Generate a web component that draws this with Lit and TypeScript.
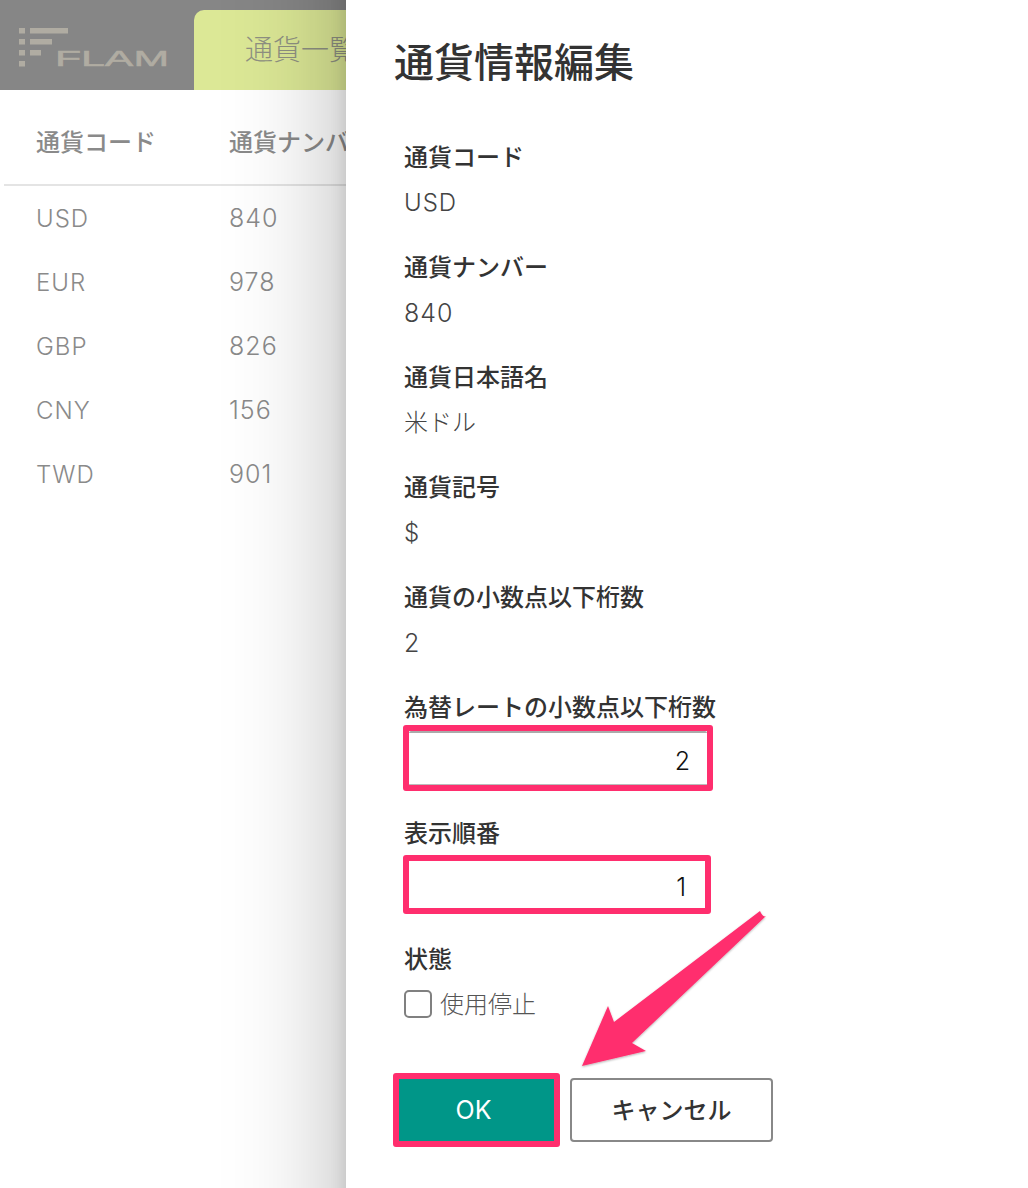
import { LitElement, html, css, svg } from "lit";
import { customElement } from "lit/decorators.js";

const ROWS = [
  ["USD", "840"],
  ["EUR", "978"],
  ["GBP", "826"],
  ["CNY", "156"],
  ["TWD", "901"],
];

const FIELDS = [
  ["通貨コード", "USD"],
  ["通貨ナンバー", "840"],
  ["通貨日本語名", "米ドル"],
  ["通貨記号", "$"],
  ["通貨の小数点以下桁数", "2"],
];

const isNum = (v: string) => /^[0-9]+$/.test(v);
const isLatin = (v: string) => /^[\x20-\x7e]+$/.test(v);

@customElement("app-root")
export class AppRoot extends LitElement {
  static styles = css`
    :host {
      display: block;
      position: relative;
      width: 1028px;
      height: 1188px;
      overflow: hidden;
      background: #fff;
      font-family: Inter, "Noto Sans CJK JP", sans-serif;
      font-size: 24px;
      color: #333;
    }
    .header {
      display: flex;
      align-items: flex-end;
      height: 90px;
      background: #868686;
    }
    .logo {
      display: block;
      width: 194px;
      height: 90px;
      flex: none;
    }
    .logo-text {
      font-family: "Liberation Sans", sans-serif;
      font-size: 22px;
      font-weight: 400;
      fill: #b0aca2;
      stroke: #b0aca2;
      stroke-width: 0.5px;
    }
    .tab {
      flex: none;
      width: 240px;
      height: 80px;
      box-sizing: border-box;
      padding: 0 0 0 51px;
      border-radius: 10px 0 0 0;
      background: #dce896;
      color: #8f9183;
      font-size: 28px;
      font-weight: 300;
      line-height: 80px;
      white-space: nowrap;
    }
    .table {
      margin-left: 4px;
      width: 500px;
      color: #8a8a8a;
    }
    .thead {
      display: flex;
      height: 95px;
      box-sizing: border-box;
      padding-top: 6px;
      align-items: center;
      border-bottom: 2px solid #e4e4e4;
      font-weight: 500;
      margin-top: 1px;
    }
    .tr {
      display: flex;
      height: 64px;
      align-items: center;
      font-weight: 300;
      letter-spacing: 1px;
    }
    .cell1 {
      width: 193px;
      padding-left: 32px;
      flex: none;
    }
    .digits {
      font-size: 25px;
    }
    .panel {
      position: absolute;
      z-index: 1;
      top: 0;
      right: 0;
      bottom: 0;
      width: 682px;
      box-sizing: border-box;
      padding: 35px 0 0 58px;
      background: #fff;
    }
    .panel::before {
      content: "";
      position: absolute;
      z-index: -1;
      left: 0;
      right: 0;
      top: -300px;
      bottom: -300px;
      box-shadow: 0 0 110px rgba(0, 0, 0, 0.3), 0 0 16px rgba(0, 0, 0, 0.12);
    }
    h1 {
      margin: 0 0 50px -10px;
      font-size: 40px;
      font-weight: 500;
      line-height: 56px;
      color: #333;
    }
    .label {
      font-weight: 500;
      line-height: 34px;
      color: #333;
    }
    .value {
      margin: 11px 0 31px;
      font-weight: 300;
      line-height: 34px;
      color: #444;
    }
    .latin {
      letter-spacing: 1px;
    }
    .box {
      box-sizing: border-box;
      border: 6px solid #ff2e6e;
      border-radius: 3px;
      margin-left: -1px;
    }
    .box input {
      display: block;
      box-sizing: border-box;
      width: 100%;
      height: 100%;
      margin: 0;
      background: #fff;
      font: 300 25px Inter, sans-serif;
      color: #111;
      text-align: right;
      outline: none;
    }
    .box-a {
      width: 310px;
      height: 66px;
      margin-top: 0;
      margin-bottom: 26px;
    }
    .box-a input {
      border: 0;
      border-top: 2px solid #aaa;
      border-bottom: 1px solid #bbb;
      border-radius: 2px 2px 0 0;
      padding: 4px 17px 0 0;
    }
    .box-b {
      width: 308px;
      height: 59px;
      margin-top: 4px;
      margin-bottom: 29px;
    }
    .box-b input {
      border: 0;
      padding: 4px 19px 0 0;
    }
    .check-row {
      display: flex;
      align-items: center;
      gap: 8px;
      height: 28px;
      margin-top: 13px;
      font-weight: 300;
      line-height: 24px;
      color: #555;
    }
    .check {
      flex: none;
      box-sizing: border-box;
      width: 28px;
      height: 28px;
      border: 2px solid #808080;
      border-radius: 5px;
      background: #fff;
    }
    .check-text {
      margin-top: 1px;
    }
    .actions {
      display: flex;
      align-items: center;
      gap: 10px;
      margin: 55px 0 0 -11px;
    }
    .btn {
      box-sizing: border-box;
      font-family: inherit;
      font-size: 24px;
      font-weight: 500;
      padding: 0;
      cursor: pointer;
    }
    .ok {
      width: 167px;
      height: 74px;
      border: 6px solid #ff2e6e;
      border-radius: 3px;
      background: #009688;
      color: #fff;
      font-size: 25px;
      font-weight: 400;
      padding-right: 6px;
    }
    .cancel {
      width: 203px;
      height: 64px;
      border: 2px solid #888;
      border-radius: 4px;
      background: #fff;
      color: #333;
      padding-bottom: 4px;
    }
    .arrow {
      position: absolute;
      z-index: 2;
      left: 0;
      top: 0;
      width: 1028px;
      height: 1188px;
      pointer-events: none;
    }
  `;

  render() {
    return html`
      <div class="header">
        <svg class="logo" viewBox="0 0 194 90">
          ${[28, 39, 50, 61].map((y) => svg`<rect x="19" y=${y} width="6" height="5.5" fill="#b0aca2"></rect>`)}
          <rect x="30" y="28" width="38" height="5.5" fill="#b0aca2"></rect>
          <rect x="30" y="39" width="22" height="5.5" fill="#b0aca2"></rect>
          <rect x="30" y="50" width="11" height="5.5" fill="#b0aca2"></rect>
          <text class="logo-text" x="55" y="66" textLength="114" lengthAdjust="spacingAndGlyphs">FLAM</text>
        </svg>
        <div class="tab">通貨一覧</div>
      </div>
      <div class="table">
        <div class="thead">
          <div class="cell1">通貨コード</div>
          <div>通貨ナンバー</div>
        </div>
        <div>
          ${ROWS.map(
            ([code, num]) =>
              html`<div class="tr"><div class="cell1">${code}</div><div class="digits">${num}</div></div>`
          )}
        </div>
      </div>
      <div class="panel">
        <h1>通貨情報編集</h1>
        ${FIELDS.map(
          ([label, value]) =>
            html`<div class="label">${label}</div>
              <div class="value ${isLatin(value) ? "latin" : ""} ${isNum(value) ? "digits" : ""}">${value}</div>`
        )}
        <div class="label">為替レートの小数点以下桁数</div>
        <div class="box box-a"><input value="2" /></div>
        <div class="label">表示順番</div>
        <div class="box box-b"><input value="1" /></div>
        <div class="label">状態</div>
        <div class="check-row"><span class="check"></span><span class="check-text">使用停止</span></div>
        <div class="actions">
          <button class="btn ok">OK</button>
          <button class="btn cancel">キャンセル</button>
        </div>
      </div>
      <svg class="arrow" viewBox="0 0 1028 1188">
        <defs>
          <filter id="s" x="-10%" y="-10%" width="120%" height="120%">
            <feDropShadow dx="0" dy="1" stdDeviation="1" flood-color="#000" flood-opacity="0.3"></feDropShadow>
          </filter>
        </defs>
        <path
          d="M766 916 Q763 918 760 911 L614 1022 L608 1006 L582 1066 L646 1051 L632 1043 Z"
          fill="#ff2e6e"
          filter="url(#s)"
        ></path>
      </svg>
    `;
  }
}
